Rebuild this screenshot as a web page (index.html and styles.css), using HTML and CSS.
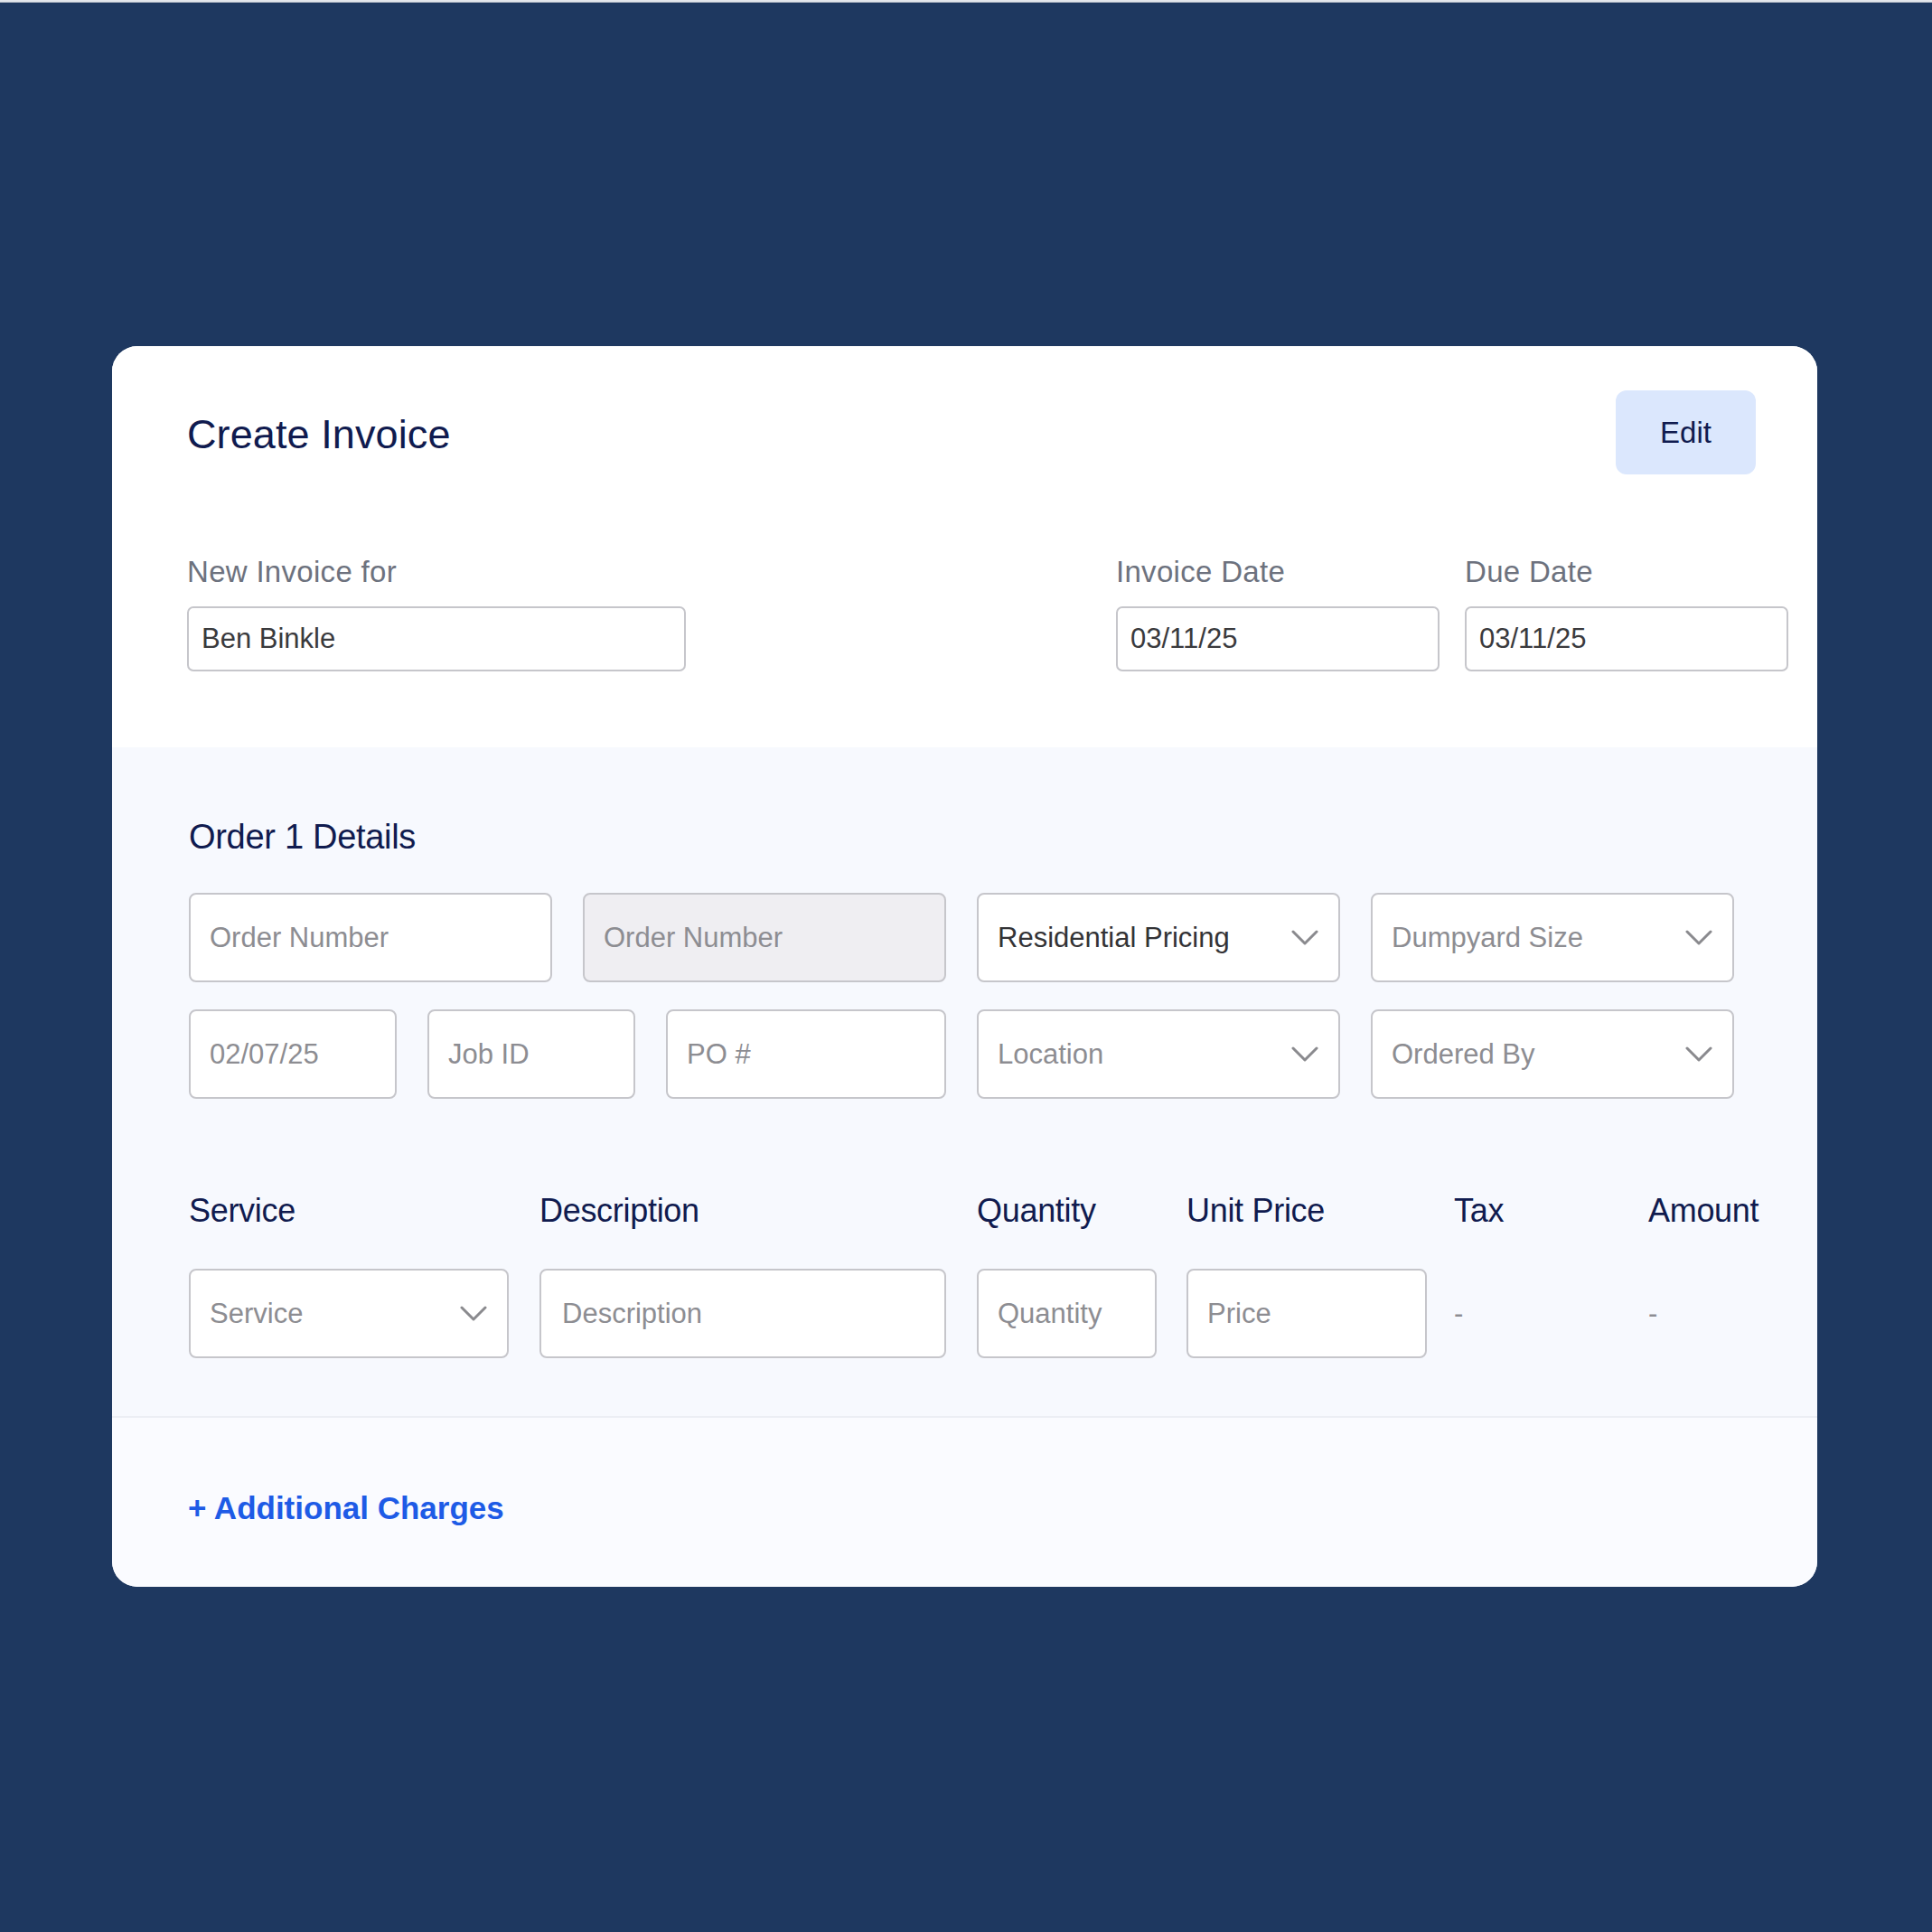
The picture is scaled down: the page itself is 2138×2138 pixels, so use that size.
FILE: index.html
```html
<!DOCTYPE html>
<html lang="en">
<head>
<meta charset="utf-8">
<title>Create Invoice</title>
<link rel="stylesheet" href="styles.css">
</head>
<body>
<div class="topline"></div>
<main class="card">
  <section class="head">
    <div class="title-row">
      <h1 class="title">Create Invoice</h1>
      <button class="edit-btn">Edit</button>
    </div>
    <div class="meta-row">
      <div class="group group-name">
        <div class="label">New Invoice for</div>
        <div class="input">Ben Binkle</div>
      </div>
      <div class="spacer"></div>
      <div class="group group-date">
        <div class="label">Invoice Date</div>
        <div class="input input-date">03/11/25</div>
      </div>
      <div class="group group-date">
        <div class="label">Due Date</div>
        <div class="input input-date">03/11/25</div>
      </div>
    </div>
  </section>

  <section class="order">
    <h2 class="order-title">Order 1 Details</h2>
    <div class="order-grid">
      <div class="field placeholder">Order Number</div>
      <div class="field placeholder disabled">Order Number</div>
      <div class="field select filled">Residential Pricing<svg class="chev" viewBox="0 0 30 17"><path d="M2 2 L15 15 L28 2"/></svg></div>
      <div class="field select placeholder">Dumpyard Size<svg class="chev" viewBox="0 0 30 17"><path d="M2 2 L15 15 L28 2"/></svg></div>
      <div class="split">
        <div class="field placeholder w-date">02/07/25</div>
        <div class="field placeholder w-job">Job ID</div>
        <div class="field placeholder w-po">PO #</div>
      </div>
      <div class="field select placeholder">Location<svg class="chev" viewBox="0 0 30 17"><path d="M2 2 L15 15 L28 2"/></svg></div>
      <div class="field select placeholder">Ordered By<svg class="chev" viewBox="0 0 30 17"><path d="M2 2 L15 15 L28 2"/></svg></div>
    </div>

    <div class="line-grid line-head">
      <div>Service</div>
      <div>Description</div>
      <div>Quantity</div>
      <div>Unit Price</div>
      <div>Tax</div>
      <div>Amount</div>
    </div>
    <div class="line-grid line-row">
      <div class="field select placeholder w-service">Service<svg class="chev" viewBox="0 0 30 17"><path d="M2 2 L15 15 L28 2"/></svg></div>
      <div class="field placeholder w-desc">Description</div>
      <div class="field placeholder w-qty">Quantity</div>
      <div class="field placeholder w-price">Price</div>
      <div class="dash">-</div>
      <div class="dash">-</div>
    </div>
  </section>

  <section class="foot">
    <a class="add-link" href="#">+ Additional Charges</a>
  </section>
</main>
</body>
</html>
```

FILE: styles.css
```css
* { box-sizing: border-box; }

html, body {
  margin: 0;
  padding: 0;
}

body {
  background: #1e3860;
  min-height: 2138px;
  font-family: "Liberation Sans", Arial, sans-serif;
}

.topline {
  height: 3px;
  background: #e4e7ec;
  border-bottom: 1px solid #a9b2bf;
}

.card {
  margin: 380px 0 0 124px;
  width: 1887px;
  border-radius: 28px;
  overflow: hidden;
  background: #ffffff;
}

/* header */
.head {
  background: #ffffff;
  padding: 49px 0 84px 0;
}

.title-row {
  display: flex;
  justify-content: space-between;
  align-items: center;
  padding: 0 68px 0 83px;
}

.title {
  margin: 0;
  padding-top: 4px;
  font-size: 45px;
  line-height: 45px;
  font-weight: 400;
  color: #101b4f;
  letter-spacing: 0.1px;
}

.edit-btn {
  width: 155px;
  height: 93px;
  border: none;
  border-radius: 12px;
  background: #dbe7fd;
  color: #101b4f;
  font-family: "Liberation Sans", Arial, sans-serif;
  font-size: 33px;
  padding: 0;
}

.meta-row {
  display: flex;
  align-items: flex-start;
  gap: 28px;
  margin-top: 92px;
  padding: 0 32px 0 83px;
}

.group { display: flex; flex-direction: column; }
.group-name { width: 552px; }
.group-date { width: 358px; }
.spacer { flex: 1; }

.label {
  font-size: 33px;
  line-height: 32px;
  color: #6d727e;
  margin-bottom: 22px;
  letter-spacing: 0.3px;
}

.input {
  height: 72px;
  border: 2px solid #c6c6cb;
  border-radius: 7px;
  display: flex;
  align-items: center;
  padding-left: 14px;
  font-size: 31px;
  color: #3a3a3d;
  background: #fff;
}

/* order */
.order {
  background: #f7f9fe;
  border-bottom: 2px solid #eceef4;
  padding: 80px 0 64px 85px;
}

.order-title {
  margin: 0;
  font-size: 38px;
  line-height: 38px;
  font-weight: 400;
  color: #101b4f;
  letter-spacing: -0.3px;
}

.order-grid {
  margin-top: 43px;
  display: grid;
  grid-template-columns: repeat(4, 402px);
  grid-auto-rows: 99px;
  column-gap: 34px;
  row-gap: 30px;
}

.split {
  grid-column: span 2;
  display: flex;
  gap: 34px;
}

.field {
  height: 99px;
  border: 2px solid #c6c6cb;
  border-radius: 8px;
  background: #ffffff;
  display: flex;
  align-items: center;
  padding: 0 22px 0 21px;
  font-size: 31px;
  position: relative;
}

.placeholder { color: #8d8d92; }
.filled { color: #333336; }
.disabled { background: #efeef2; }

.select { justify-content: space-between; }

.chev {
  width: 30px;
  height: 17px;
  flex: none;
}
.chev path {
  fill: none;
  stroke: #8a8a8e;
  stroke-width: 3;
  stroke-linecap: round;
  stroke-linejoin: round;
}

.w-date { width: 230px; }
.w-job { width: 230px; }
.w-po { width: 310px; }

.line-grid {
  display: grid;
  grid-template-columns: 388px 484px 232px 296px 215px 1fr;
}

.line-head {
  margin-top: 106px;
  font-size: 36px;
  line-height: 36px;
  color: #101b4f;
  letter-spacing: -0.3px;
}

.line-row {
  margin-top: 46px;
  align-items: center;
}

.w-service { width: 354px; }
.w-desc { width: 450px; padding-left: 23px; }
.w-qty { width: 199px; }
.w-price { width: 266px; }

.dash {
  font-size: 31px;
  color: #8d8d92;
}

/* footer */
.foot {
  background: #fafbff;
  padding: 83px 0 70px 84px;
}

.add-link {
  display: block;
  font-size: 35px;
  line-height: 34px;
  font-weight: 700;
  color: #1e5be6;
  text-decoration: none;
  letter-spacing: 0;
}
```
